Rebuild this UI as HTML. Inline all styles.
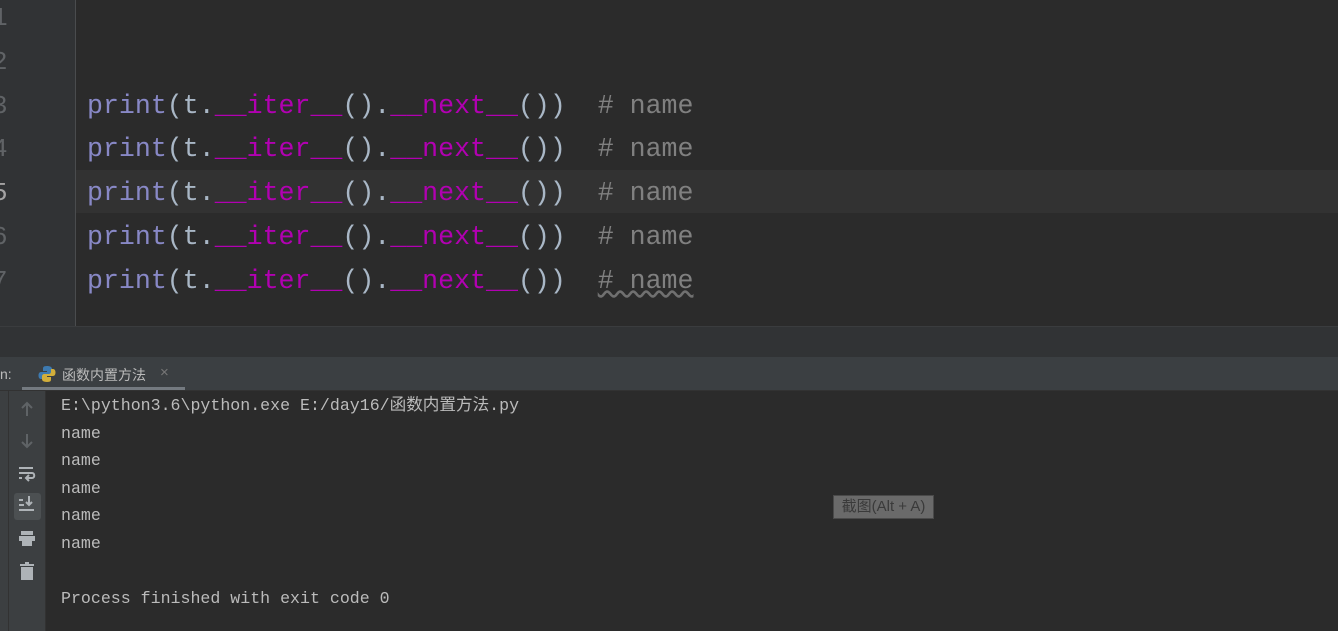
<!DOCTYPE html>
<html><head><meta charset="utf-8"><style>
body{margin:0;width:1338px;height:631px;overflow:hidden;background:#2b2b2b;position:relative;font-family:"Liberation Mono",monospace}
.abs{position:absolute}
.gut{left:0;top:0;width:75px;height:326px;background:#313335;border-right:1px solid #4a4c4e}
.ln{position:absolute;left:-8px;width:20px;color:#606366;font-size:26px;line-height:44px}
.code{position:absolute;left:87px;font-size:26.6px;line-height:44px;color:#a9b7c6;white-space:pre}
.p{color:#8888c6}.d{color:#b200b2}.c{color:#808080}
.cur{left:76px;top:170px;width:1262px;height:43px;background:#323232}
.con{font-size:16.6px;line-height:20px;height:20px;color:#bbbbbb;position:absolute;left:61px;white-space:pre;font-family:"Liberation Mono","Noto Sans CJK SC",monospace}
</style></head><body>
<div class="abs gut"></div>
<div class="abs cur"></div>
<div class="ln" style="top:-4px">1</div>
<div class="ln" style="top:40px">2</div>
<div class="ln" style="top:84px">3</div>
<div class="ln" style="top:127px">4</div>
<div class="ln" style="top:171px;color:#a4a3a3">5</div>
<div class="ln" style="top:215px">6</div>
<div class="ln" style="top:259px">7</div>
<div class="code" style="top:84px"><span class="p">print</span>(t.<span class="d">__iter__</span>().<span class="d">__next__</span>())  <span class="c"># name</span></div>
<div class="code" style="top:127px"><span class="p">print</span>(t.<span class="d">__iter__</span>().<span class="d">__next__</span>())  <span class="c"># name</span></div>
<div class="code" style="top:171px"><span class="p">print</span>(t.<span class="d">__iter__</span>().<span class="d">__next__</span>())  <span class="c"># name</span></div>
<div class="code" style="top:215px"><span class="p">print</span>(t.<span class="d">__iter__</span>().<span class="d">__next__</span>())  <span class="c"># name</span></div>
<div class="code" style="top:259px"><span class="p">print</span>(t.<span class="d">__iter__</span>().<span class="d">__next__</span>())  <span class="c" style="text-decoration:underline wavy #707070">#&nbsp;name</span></div>
<div class="abs" style="left:0;top:326px;width:1338px;height:31px;background:#313335;border-top:1px solid #3a3c3e"></div>
<div class="abs" style="left:0;top:357px;width:1338px;height:33px;background:#3b3f42;border-bottom:1px solid #323232"></div>
<div class="abs" style="left:0;top:366px;font:14px 'Liberation Sans',sans-serif;color:#bbb">n:</div>
<svg class="abs" style="left:38px;top:365px" width="18" height="18" viewBox="0 0 18 18"><path d="M9 1c-4 0-4 1.5-4 3v2h4v1H3c-2 0-2.5 2-2.5 3.5S1 14 3 14h2v-2.5c0-1.5 1-2.5 2.5-2.5h4c1.5 0 2.5-1 2.5-2.5V4c0-2-2-3-5-3z" fill="#3d7ab0"/><path d="M9 17c4 0 4-1.5 4-3v-2H9v-1h6c2 0 2.5-2 2.5-3.5S17 4 15 4h-2v2.5C13 8 12 9 10.5 9h-4C5 9 4 10 4 11.5V14c0 2 2 3 5 3z" fill="#d2ae3a"/></svg>
<div class="abs" style="left:62px;top:365px;font:14px 'Liberation Sans','Noto Sans CJK SC',sans-serif;color:#bbb">函数内置方法</div>
<div class="abs" style="left:160px;top:364px;font:15px 'Liberation Sans',sans-serif;color:#777">×</div>
<div class="abs" style="left:22px;top:387px;width:163px;height:3px;background:#747a80"></div>
<div class="abs" style="left:0;top:391px;width:45px;height:240px;background:#3c3f41;border-right:1px solid #323232"></div>
<div class="abs" style="left:8px;top:391px;width:1px;height:240px;background:#323232"></div>
<svg class="abs" style="left:17px;top:400px" width="20" height="50" viewBox="0 0 20 50"><g stroke="#5f6366" stroke-width="2" fill="none"><path d="M10 3v13M5 8l5-5 5 5"/><path d="M10 34v13M5 42l5 5 5-5"/></g></svg>
<div class="abs" style="left:14px;top:493px;width:27px;height:27px;background:#4c5052;border-radius:3px"></div>
<svg class="abs" style="left:17px;top:465px" width="20" height="130" viewBox="0 0 20 130"><g stroke="#aeb3b7" stroke-width="2" fill="none"><path d="M2 3h14M2 8h13c3 0 3 5 0 5H10M12 10l-3 3 3 3M2 13h3"/><path d="M2 35h4M2 40h5M2 45h15M12 31v9M9 37l3 3 3-3"/></g><g fill="#aeb3b7"><rect x="4" y="66" width="12" height="4"/><rect x="2" y="71" width="16" height="5"/><rect x="5" y="76" width="10" height="5"/><rect x="3" y="99" width="14" height="2"/><rect x="8" y="97" width="4" height="2"/><rect x="4" y="102" width="12" height="13"/></g></svg>
<div class="con" style="top:396px">E:\python3.6\python.exe E:/day16/函数内置方法.py</div>
<div class="con" style="top:424px">name</div>
<div class="con" style="top:451px">name</div>
<div class="con" style="top:479px">name</div>
<div class="con" style="top:506px">name</div>
<div class="con" style="top:534px">name</div>
<div class="con" style="top:589px">Process finished with exit code 0</div>
<div class="abs" style="left:833px;top:495px;width:99px;height:22px;background:#6a6a6a;border:1px solid #4a4a4a;font:15px 'Liberation Sans','Noto Sans CJK SC',sans-serif;color:#3a3a3a;line-height:22px;text-align:center">截图(Alt + A)</div>
</body></html>
